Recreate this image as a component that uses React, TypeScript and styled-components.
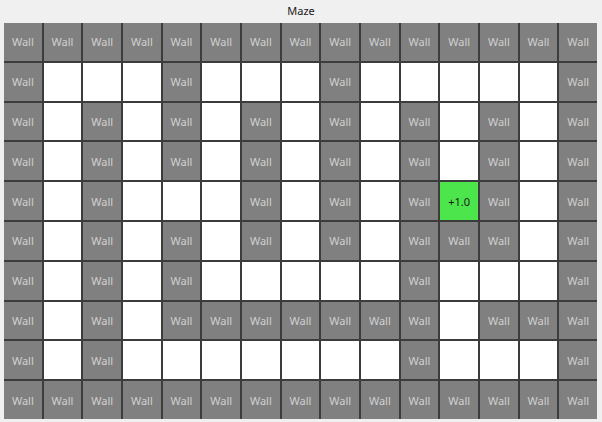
import { FunctionComponent } from 'react'
import styled, { createGlobalStyle } from 'styled-components'

const GlobalStyle = createGlobalStyle`
  html, body {
    margin: 0;
    padding: 0;
    background: #f0f0f0;
    font-family: "Noto Sans", "Liberation Sans", sans-serif;
  }
`

// W = wall, . = empty, G = goal
const MAZE = [
  'WWWWWWWWWWWWWWW',
  'W...W...W.....W',
  'W.W.W.W.W.W.W.W',
  'W.W.W.W.W.W.W.W',
  'W.W...W.W.WGW.W',
  'W.W.W.W.W.WWW.W',
  'W.W.W.....W...W',
  'W.W.WWWWWWW.WWW',
  'W.W.......W...W',
  'WWWWWWWWWWWWWWW',
]

type Kind = 'wall' | 'empty' | 'goal'

const kindOf = (c: string): Kind => (c === 'W' ? 'wall' : c === 'G' ? 'goal' : 'empty')

const App: FunctionComponent = () => {
  return (
    <Window>
      <GlobalStyle />
      <Title>Maze</Title>
      <Grid>
        {MAZE.flatMap((row, r) =>
          row.split('').map((c, i) => {
            const kind = kindOf(c)
            return (
              <Cell key={`${r}-${i}`} $kind={kind}>
                {kind === 'wall' ? 'Wall' : kind === 'goal' ? '+1.0' : ''}
              </Cell>
            )
          })
        )}
      </Grid>
    </Window>
  )
}

export default App

const Window = styled.div`
  width: 602px;
  height: 422px;
  display: flex;
  flex-direction: column;
  align-items: flex-start;
  background: #f0f0f0;
`

const Title = styled.div`
  width: 100%;
  height: 23px;
  display: flex;
  align-items: center;
  justify-content: center;
  font-size: 11px;
  color: #1a1a1a;
  padding-bottom: 2px;
  box-sizing: border-box;
`

const Grid = styled.div`
  margin-left: 4px;
  width: 593px;
  height: 396px;
  display: grid;
  grid-template-columns: repeat(15, 1fr);
  grid-template-rows: repeat(10, 1fr);
  gap: 2px;
  background: #3c3c3c;
`

const Cell = styled.div<{ $kind: Kind }>`
  display: flex;
  align-items: center;
  justify-content: center;
  font-size: 11px;
  background: ${p => (p.$kind === 'wall' ? '#808080' : p.$kind === 'goal' ? '#4ce64c' : '#ffffff')};
  color: ${p => (p.$kind === 'wall' ? '#d0d0d0' : '#1a1a1a')};
`
